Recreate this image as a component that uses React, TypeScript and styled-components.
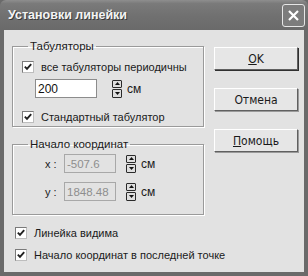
import React, { FC } from 'react'
import styled, { createGlobalStyle } from 'styled-components'

const GlobalStyle = createGlobalStyle`
  html, body { margin: 0; padding: 0; }
  body {
    width: 308px;
    height: 276px;
    overflow: hidden;
    font-family: "Liberation Sans", Arial, sans-serif;
    font-size: 11px;
    color: #1a1a1a;
  }
`

const Frame = styled.div`
  width: 308px;
  height: 276px;
  box-sizing: border-box;
  background: #6a6a6a;
  padding: 0 4px 4px 4px;
  display: flex;
  flex-direction: column;
`

const TitleBar = styled.div`
  height: 30px;
  margin: 0 -4px;
  padding: 0 3px 0 8px;
  display: flex;
  align-items: center;
  justify-content: space-between;
  background: linear-gradient(#8e8e8e 0%, #7a7a7a 12%, #707070 55%, #6a6a6a 100%);
  border-radius: 6px 6px 0 0;
`

const Title = styled.div`
  font-family: "Liberation Sans", Arial, sans-serif;
  font-weight: bold;
  font-size: 12.5px;
  color: #f4f4f4;
  text-shadow: 1px 1px 0 #3a3a3a;
`

const CloseBtn = styled.div`
  width: 21px;
  height: 21px;
  border: 1px solid #e6e6e6;
  border-radius: 3px;
  background: #7c7c7c;
  display: flex;
  align-items: center;
  justify-content: center;
`

const Body = styled.div`
  flex: 1;
  background: #e2e2e2;
  padding: 9px 6px 0 8px;
  display: flex;
  flex-direction: column;
`

const Top = styled.div`
  display: flex;
  gap: 10px;
`

const LeftCol = styled.div`
  width: 192px;
  display: flex;
  flex-direction: column;
  gap: 10px;
`

const RightCol = styled.div`
  display: flex;
  flex-direction: column;
  gap: 18px;
  padding-top: 8px;
`

const Group = styled.fieldset<{ $h: number }>`
  margin: 0;
  padding: 0 0 0 9px;
  height: ${p => p.$h}px;
  box-sizing: border-box;
  border: 1px solid #9a9a9a;
  box-shadow: 1px 1px 0 #ffffff, inset 1px 1px 0 #ffffff;
  min-width: 0;
`

const Legend = styled.legend`
  padding: 0 2px;
  margin-left: 6px;
  line-height: 14px;
  font-size: 11.5px;
  color: #1a1a1a;
`

const Row = styled.div<{ $mt?: number; $ml?: number }>`
  display: flex;
  align-items: center;
  height: 19px;
  margin-top: ${p => p.$mt ?? 0}px;
  margin-left: ${p => p.$ml ?? 0}px;
`

const CheckBox = styled.span`
  width: 10px;
  height: 10px;
  border: 1px solid;
  border-color: #7a7a7a #bdbdbd #bdbdbd #7a7a7a;
  background: #ffffff;
  display: inline-flex;
  align-items: center;
  justify-content: center;
  margin-right: 7px;
  flex-shrink: 0;
`

const Field = styled.div<{ $w: number; $disabled?: boolean }>`
  width: ${p => p.$w}px;
  height: 19px;
  box-sizing: border-box;
  border: 1px solid ${p => (p.$disabled ? '#a8a8a8' : '#8c8c8c')};
  background: ${p => (p.$disabled ? '#e2e2e2' : '#ffffff')};
  color: ${p => (p.$disabled ? '#8e8e8e' : '#111111')};
  padding: 0 2px;
  display: flex;
  align-items: center;
  font-size: ${p => (p.$disabled ? 11.5 : 12)}px;
  overflow: hidden;
  white-space: nowrap;
`

const Spin = styled.div<{ $ml: number }>`
  margin-left: ${p => p.$ml}px;
  width: 10px;
  height: 18px;
  display: flex;
  flex-direction: column;
  gap: 1px;
`

const SpinHalf = styled.div`
  flex: 1;
  box-sizing: border-box;
  border: 1px solid #2a2a2a;
  background: #dedede;
  border-radius: 1px;
  display: flex;
  align-items: center;
  justify-content: center;
`

const Unit = styled.span`
  margin-left: 5px;
  font-size: 12px;
`

const AxisLabel = styled.span`
  width: 14px;
  margin-right: 5px;
`

const Button = styled.div<{ $default?: boolean }>`
  width: 84px;
  height: 23px;
  box-sizing: border-box;
  background: #e6e6e6;
  border: 1px solid;
  border-color: #ffffff #606060 #606060 #ffffff;
  box-shadow: ${p => (p.$default ? '1px 1px 0 #303030' : '1px 1px 0 #9a9a9a')};
  display: flex;
  align-items: center;
  justify-content: center;
  font-family: "DejaVu Sans Condensed", "Liberation Sans Narrow", sans-serif;
  font-size: 12px;
  color: #1a1a1a;
`

const U = styled.span`
  text-decoration: underline;
`

const Bottom = styled.div`
  padding-left: 3px;
  margin-top: 8px;
  display: flex;
  flex-direction: column;
  gap: 3px;
`

const Tick: FC = () => (
  <svg width="8" height="8" viewBox="0 0 8 8">
    <path d="M0.8 3.6 L3 5.8 L7.2 1.2" fill="none" stroke="#202020" strokeWidth="1.9" />
  </svg>
)

const Check: FC<{ label: string }> = ({ label }) => (
  <>
    <CheckBox><Tick /></CheckBox>
    <span>{label}</span>
  </>
)

const Spinner: FC<{ ml: number }> = ({ ml }) => (
  <Spin $ml={ml}>
    <SpinHalf>
      <svg width="5" height="3" viewBox="0 0 5 3"><path d="M2.5 0 L5 3 L0 3 Z" fill="#111" /></svg>
    </SpinHalf>
    <SpinHalf>
      <svg width="5" height="3" viewBox="0 0 5 3"><path d="M0 0 L5 0 L2.5 3 Z" fill="#111" /></svg>
    </SpinHalf>
  </Spin>
)

export default function App() {
  return (
    <Frame>
      <GlobalStyle />
      <TitleBar>
        <Title>Установки линейки</Title>
        <CloseBtn>
          <svg width="11" height="11" viewBox="0 0 11 11">
            <path d="M1 1 L10 10 M10 1 L1 10" stroke="#ffffff" strokeWidth="2.2" />
          </svg>
        </CloseBtn>
      </TitleBar>
      <Body>
        <Top>
          <LeftCol>
            <Group $h={88}>
              <Legend>Табуляторы</Legend>
              <Row $mt={4}><Check label="все табуляторы периодичны" /></Row>
              <Row $mt={3} $ml={13}>
                <Field $w={62}>200</Field>
                <Spinner ml={15} />
                <Unit>см</Unit>
              </Row>
              <Row $mt={9}><Check label="Стандартный табулятор" /></Row>
            </Group>
            <Group $h={78}>
              <Legend>Начало координат</Legend>
              <Row $mt={3} $ml={23}>
                <AxisLabel>x :</AxisLabel>
                <Field $w={52} $disabled>-507.6</Field>
                <Spinner ml={10} />
                <Unit>см</Unit>
              </Row>
              <Row $mt={9} $ml={23}>
                <AxisLabel>y :</AxisLabel>
                <Field $w={52} $disabled>1848.48</Field>
                <Spinner ml={10} />
                <Unit>см</Unit>
              </Row>
            </Group>
          </LeftCol>
          <RightCol>
            <Button $default><U>О</U>K</Button>
            <Button>Отмена</Button>
            <Button><U>П</U>омощь</Button>
          </RightCol>
        </Top>
        <Bottom>
          <Row><Check label="Линейка видима" /></Row>
          <Row><Check label="Начало координат в последней точке" /></Row>
        </Bottom>
      </Body>
    </Frame>
  )
}
